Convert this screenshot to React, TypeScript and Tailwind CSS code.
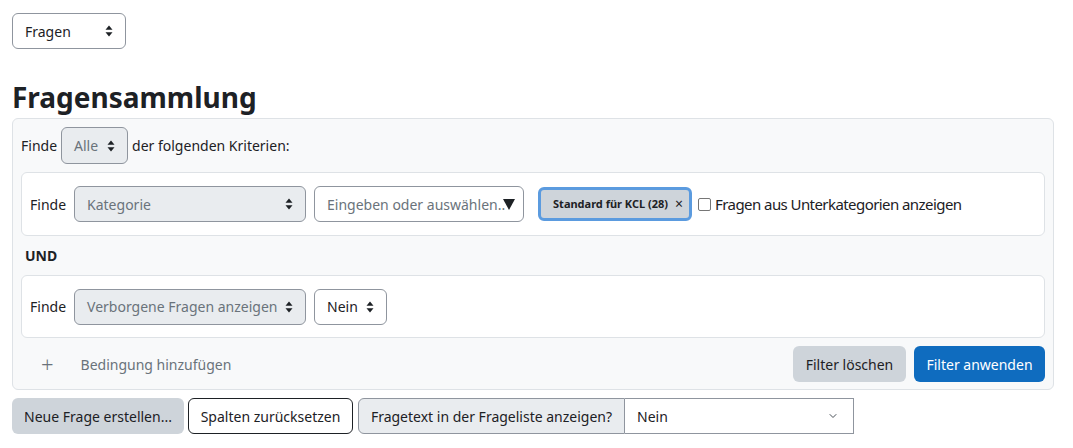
import { ChevronDown } from "lucide-react";

const font = { fontFamily: '"Noto Sans", "Liberation Sans", sans-serif' };

function UpDown({ className = "" }: { className?: string }) {
  return (
    <svg width="8" height="12" viewBox="0 0 8 12" className={className} fill="currentColor">
      <path d="M4 0.5 L7.5 4.8 H0.5 Z" />
      <path d="M4 11.5 L7.5 7.2 H0.5 Z" />
    </svg>
  );
}

function Select({
  label,
  className = "",
  muted = false,
}: {
  label: string;
  className?: string;
  muted?: boolean;
}) {
  return (
    <div
      className={`flex h-9 items-center justify-between whitespace-nowrap rounded-md border border-[#8f959e] px-3 ${
        muted ? "bg-[#e9ecef] text-[#6a737b]" : "bg-white text-[#1d2125]"
      } ${className}`}
    >
      <span>{label}</span>
      <UpDown className="ml-2 shrink-0 text-[#1d2125]" />
    </div>
  );
}

export default function App() {
  return (
    <div className="w-[1066px] bg-white px-3 pt-[13px] text-[14px] text-[#1d2125]" style={font}>
      <Select label="Fragen" className="w-[114px]" />

      <h2 className="mt-[28px] text-[28px] font-bold leading-[40px]">Fragensammlung</h2>

      <div className="mt-[1px] rounded-md border border-[#dee2e6] bg-[#f8f9fa] px-2 pb-[7px] pt-2">
        <div className="flex items-center gap-1">
          <span>Finde</span>
          <Select label="Alle" muted className="h-[37px] w-[67px] px-[12px]" />
          <span>der folgenden Kriterien:</span>
        </div>

        <div className="mt-[8px] flex h-[64px] items-center rounded-md border border-[#dee2e6] bg-white px-2">
          <span className="mr-[8px]">Finde</span>
          <Select label="Kategorie" muted className="w-[232px]" />
          <div className="ml-2 flex h-9 w-[210px] items-center justify-between rounded-md border border-[#8f959e] pl-3 pr-3 text-[#6a737b]">
            <span className="whitespace-nowrap">Eingeben oder auswählen..</span>
            <svg width="12" height="11" viewBox="0 0 12 11" className="-ml-[2px] shrink-0 text-[#1d2125]">
              <path d="M0 0 H12 L6 11 Z" fill="currentColor" />
            </svg>
          </div>
          <div className="ml-[14px] flex h-[34px] items-center rounded-md border-[3px] border-[#5b9bdf] bg-[#ced4da] pl-[12px] pr-[6px] text-[11px] font-bold">
            <span>Standard für KCL (28)</span>
            <span className="ml-[7px] text-[14px] font-normal leading-none">×</span>
          </div>
          <label className="ml-[6px] flex items-center gap-[4px]">
            <span className="inline-block h-[13px] w-[13px] rounded-[2px] border border-[#767676] bg-white" />
            <span className="text-[15px] tracking-[-0.57px]">Fragen aus Unterkategorien anzeigen</span>
          </label>
        </div>

        <div className="mt-[10px] px-1 font-bold leading-[20px]">UND</div>

        <div className="mt-[9px] flex h-[63px] items-center rounded-md border border-[#dee2e6] bg-white px-2">
          <span className="mr-[8px]">Finde</span>
          <Select label="Verborgene Fragen anzeigen" muted className="w-[232px]" />
          <Select label="Nein" className="ml-2 w-[73px]" />
        </div>

        <div className="mt-[8px] flex items-center">
          <span className="ml-[20px] text-[22px] font-light leading-none text-[#6a737b]">+</span>
          <span className="ml-[27px] text-[#6a737b]">Bedingung hinzufügen</span>
          <div className="ml-auto flex gap-2">
            <button className="h-9 w-[113px] rounded-md bg-[#ced4da] text-[#1d2125]">Filter löschen</button>
            <button className="h-9 w-[131px] rounded-md bg-[#0f6cbf] text-white">Filter anwenden</button>
          </div>
        </div>
      </div>

      <div className="mt-2 flex items-center gap-1">
        <button className="h-9 w-[172px] rounded-md bg-[#ced4da]">Neue Frage erstellen...</button>
        <button className="h-9 w-[165px] rounded-md border border-[#1d2125] bg-white">Spalten zurücksetzen</button>
        <div className="ml-[1px] flex h-9 rounded-md">
          <span className="flex w-[267px] items-center justify-center rounded-l-md border border-[#8f959e] bg-[#e9ecef]">
            Fragetext in der Frageliste anzeigen?
          </span>
          <div className="flex w-[229px] items-center justify-between border border-l-0 border-[#8f959e] bg-white pl-3 pr-[14px]">
            <span>Nein</span>
            <ChevronDown size={12} strokeWidth={2} className="text-[#495057]" />
          </div>
        </div>
      </div>
    </div>
  );
}
